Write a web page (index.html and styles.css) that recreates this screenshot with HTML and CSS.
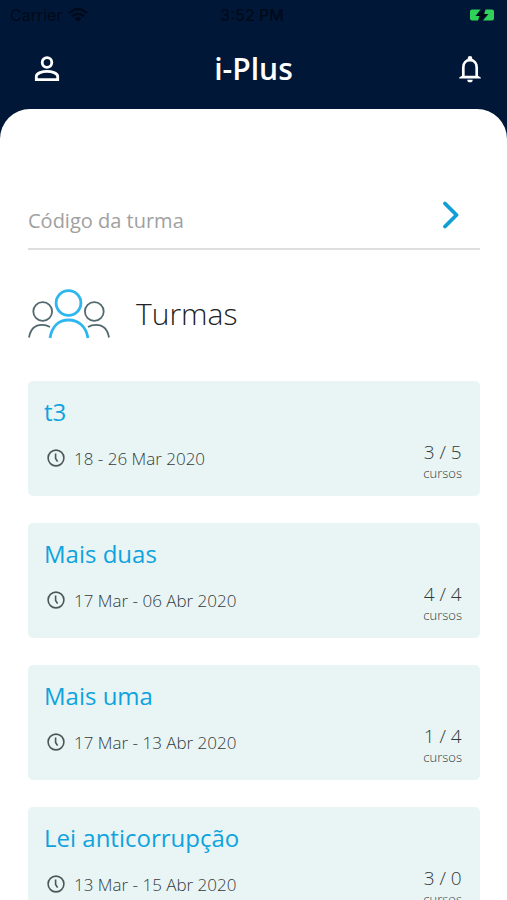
FILE: index.html
```html
<!DOCTYPE html>
<html lang="pt-BR">
<head>
<meta charset="utf-8">
<meta name="viewport" content="width=device-width, initial-scale=1">
<title>i-Plus</title>
<link rel="stylesheet" href="styles.css">
</head>
<body>
<svg width="0" height="0" class="sprite" aria-hidden="true">
  <symbol id="clock" viewBox="0 0 18 18">
    <circle cx="9" cy="9" r="7.9"/>
    <path d="M8.6 4.5V9.5L10.6 12.6"/>
  </symbol>
</svg>
<header class="top">
  <div class="status">
    <span class="carrier">Carrier
      <svg width="20" height="14" viewBox="0 0 20 14" aria-hidden="true">
        <path d="M1 5.2Q10-3 19 5.2M4 8.3Q10 3 16 8.3" fill="none" stroke="currentColor" stroke-width="2.4"/>
        <path d="M6.5 10.2Q10 7.2 13.5 10.2L10 13.7Z" fill="currentColor"/>
      </svg>
    </span>
    <span>3:52 PM</span>
    <svg class="battery" width="24" height="12" viewBox="0 0 24 12" role="img" aria-label="Carregando">
      <path d="M2 .5H10.5L5.5 7H9.5L8 11.5H2Q0 11.5 0 9.5V2.5Q0 .5 2 .5ZM15.5 .5H22Q24 .5 24 2.5V9.5Q24 11.5 22 11.5H13L18.5 5H14.2Z" fill="#30d158"/>
      <path d="M14.5 0L6.5 7H11L9.5 12L17.5 5H13Z" fill="#000a14"/>
    </svg>
  </div>
  <nav class="bar">
    <button class="icon" aria-label="Perfil">
      <svg width="26" height="26" viewBox="0 0 26 26" fill="none" stroke="#fff" stroke-width="2.8" aria-hidden="true">
        <circle cx="13" cy="6.5" r="4.8"/>
        <path d="M2.3 23.7V20.5C2.3 17 8.5 15.4 13 15.4S23.7 17 23.7 20.5V23.7Z"/>
      </svg>
    </button>
    <h1>i-Plus</h1>
    <button class="icon bell" aria-label="Notificações">
      <svg width="24" height="28" viewBox="0 0 24 28" fill="#fff" aria-hidden="true">
        <path d="M5.3 22V12.5C5.3 8 8 5.2 12 5.2S18.7 8 18.7 12.5V22" fill="none" stroke="#fff" stroke-width="2.7"/>
        <path d="M9.7 5V3.3Q9.7 1 12 1T14.3 3.3V5ZM1.2 23.6V22.6L4 20.8H20L22.8 22.6V23.6ZM9.3 24.7H14.7Q14.7 27.3 12 27.3T9.3 24.7Z"/>
      </svg>
    </button>
  </nav>
</header>
<main class="sheet">
  <form class="code">
    <input type="text" aria-label="Código da turma" placeholder="Código da turma">
    <button type="button" aria-label="Enviar código">
      <svg width="18" height="28" viewBox="0 0 18 28" fill="none" stroke="#0f9ed5" stroke-width="3.8" stroke-linecap="round" stroke-linejoin="round" aria-hidden="true"><path d="M3 2.5L14.5 14L3 25.5"/></svg>
    </button>
  </form>
  <div class="heading">
    <svg width="82" height="50" viewBox="0 0 82 50" fill="none" aria-hidden="true">
      <g stroke="#51696f" stroke-width="1.8">
        <circle cx="14.7" cy="22.5" r="9.4"/><circle cx="66.3" cy="22.5" r="9.4"/>
        <path d="M1 48.5C2.5 39.5 8 35.8 14 35.8Q18.5 35.8 22 38M81 48.5C79.5 39.5 74 35.8 68 35.8Q63.5 35.8 60 38"/>
      </g>
      <g stroke="#2eb6ef" stroke-width="2.8">
        <circle cx="40.5" cy="14" r="12.4"/>
        <path d="M22 49C24 37 31 31 40.5 31S58 37 60 49"/>
      </g>
    </svg>
    <h2>Turmas</h2>
  </div>
  <ul class="cards">
    <li class="card">
      <h3>t3</h3>
      <div class="row">
        <p class="date"><svg width="18" height="18" aria-hidden="true"><use href="#clock"/></svg>18 - 26 Mar 2020</p>
        <p class="count"><b>3 / 5</b><small>cursos</small></p>
      </div>
    </li>
    <li class="card">
      <h3>Mais duas</h3>
      <div class="row">
        <p class="date"><svg width="18" height="18" aria-hidden="true"><use href="#clock"/></svg>17 Mar - 06 Abr 2020</p>
        <p class="count"><b>4 / 4</b><small>cursos</small></p>
      </div>
    </li>
    <li class="card">
      <h3>Mais uma</h3>
      <div class="row">
        <p class="date"><svg width="18" height="18" aria-hidden="true"><use href="#clock"/></svg>17 Mar - 13 Abr 2020</p>
        <p class="count"><b>1 / 4</b><small>cursos</small></p>
      </div>
    </li>
    <li class="card">
      <h3>Lei anticorrupção</h3>
      <div class="row">
        <p class="date"><svg width="18" height="18" aria-hidden="true"><use href="#clock"/></svg>13 Mar - 15 Abr 2020</p>
        <p class="count"><b>3 / 0</b><small>cursos</small></p>
      </div>
    </li>
  </ul>
</main>
</body>
</html>
```
FILE: styles.css
```css
* { box-sizing: border-box; }
body {
  margin: 0;
  height: 100vh;
  display: flex;
  flex-direction: column;
  overflow: hidden;
  background: #001737;
  font-family: "Open Sans", "Noto Sans", sans-serif;
}
h1, h2, h3, p, ul { margin: 0; padding: 0; }
button { padding: 0; border: 0; background: none; display: flex; cursor: pointer; }
.sprite { position: absolute; }

.top { flex: none; }
.status {
  display: grid;
  grid-template-columns: 1fr auto 1fr;
  align-items: center;
  height: 29px;
  padding: 0 13px 0 10px;
  color: #000a1a;
  font: 500 16px/20px Inter, sans-serif;
}
.carrier { display: flex; align-items: center; gap: 6px; font-weight: 400; }
.battery { justify-self: end; }
.bar {
  display: grid;
  grid-template-columns: 1fr auto 1fr;
  align-items: center;
  height: 80px;
  padding: 0 25px;
}
.bar .icon { margin-left: 9px; }
.bar .bell { justify-self: end; margin-left: 0; }
.bar h1 { color: #fff; font-size: 30px; line-height: 36px; font-weight: 600; }

.sheet {
  flex: 1;
  min-height: 0;
  overflow-y: auto;
  scrollbar-width: none;
  padding: 88px 27px 28px 28px;
  background: #fff;
  border-radius: 30px 30px 0 0;
}
.code {
  display: flex;
  align-items: center;
  height: 53px;
  padding-right: 20px;
  border-bottom: 2px solid #dedede;
}
.code input {
  flex: 1;
  min-width: 0;
  height: 28px;
  margin-bottom: 4px;
  padding: 0;
  border: 0;
  outline: 0;
  background: none;
  font: 400 20px/28px "Open Sans", sans-serif;
}
.code input::placeholder { color: #a0a0a0; opacity: 1; }
.code button { margin-bottom: 16px; }

.heading { display: flex; align-items: center; gap: 26px; height: 131px; padding-bottom: 4px; }
.heading h2 { color: #222; font-size: 30px; line-height: 40px; font-weight: 300; }

.cards { display: grid; gap: 27px; list-style: none; }
.card { min-height: 115px; padding: 14px 18px 12px 16px; background: #e9f5f5; border-radius: 5px; }
.card h3 { color: #0fa3de; font-size: 24px; line-height: 34px; font-weight: 400; }
.row { display: flex; justify-content: space-between; align-items: flex-start; padding: 11px 0 0 3px; }
.date { display: flex; align-items: center; height: 36px; gap: 9px; color: #333a3b; font-size: 17px; font-weight: 300; }
.date svg { fill: none; stroke: #4c5657; stroke-width: 1.6; }
.count { display: flex; flex-direction: column; align-items: center; color: #333a3b; font-weight: 300; }
.count b { font-size: 19px; line-height: 25px; font-weight: 300; }
.count small { font-size: 13px; line-height: 17px; }
```
